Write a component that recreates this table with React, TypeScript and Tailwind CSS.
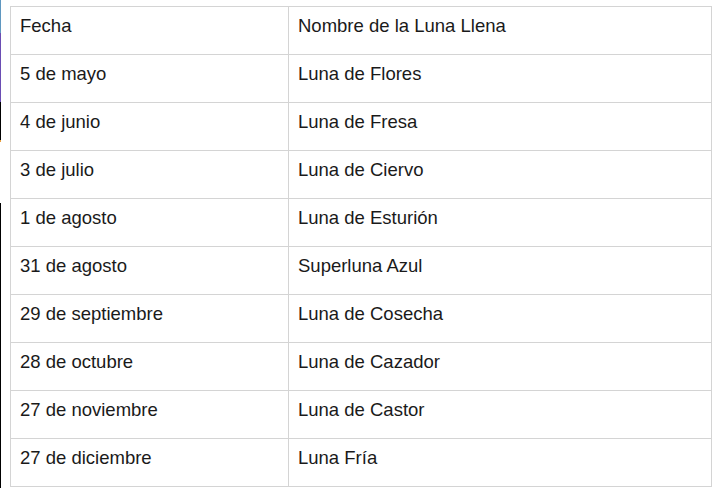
import React from 'react';

const rows: [string, string][] = [
  ['Fecha', 'Nombre de la Luna Llena'],
  ['5 de mayo', 'Luna de Flores'],
  ['4 de junio', 'Luna de Fresa'],
  ['3 de julio', 'Luna de Ciervo'],
  ['1 de agosto', 'Luna de Esturión'],
  ['31 de agosto', 'Superluna Azul'],
  ['29 de septiembre', 'Luna de Cosecha'],
  ['28 de octubre', 'Luna de Cazador'],
  ['27 de noviembre', 'Luna de Castor'],
  ['27 de diciembre', 'Luna Fría'],
];

export default function App() {
  return (
    <div className="relative flex h-[488px] w-[712px] overflow-hidden bg-white font-['Liberation_Sans',Arial,sans-serif] text-[18.5px] text-[#1a1a1a]">
      {/* left edge slivers from the neighbouring page */}
      <div className="flex w-[1px] flex-col">
        <div className="h-[33px] bg-[#5f97c0]" />
        <div className="h-[69px] bg-[#6a4db3]" />
        <div className="h-[38px] bg-black" />
        <div className="h-[2px] bg-[#e8a040]" />
        <div className="h-[61px]" />
        <div className="flex-1 bg-black" />
      </div>

      <div className="pl-[9px] pt-[6px]">
        <table className="w-[702px] border-collapse">
          <tbody>
            {rows.map(([date, name]) => (
              <tr key={date} className="h-[48px]">
                <td className="w-[278px] border border-[#d4d4d4] pl-[9px] pr-[8px] pt-[5px] pb-[15px] align-top leading-[27px]">
                  {date}
                </td>
                <td className="border border-[#d4d4d4] pl-[9px] pr-[8px] pt-[5px] pb-[15px] align-top leading-[27px]">
                  {name}
                </td>
              </tr>
            ))}
          </tbody>
        </table>
      </div>
    </div>
  );
}
